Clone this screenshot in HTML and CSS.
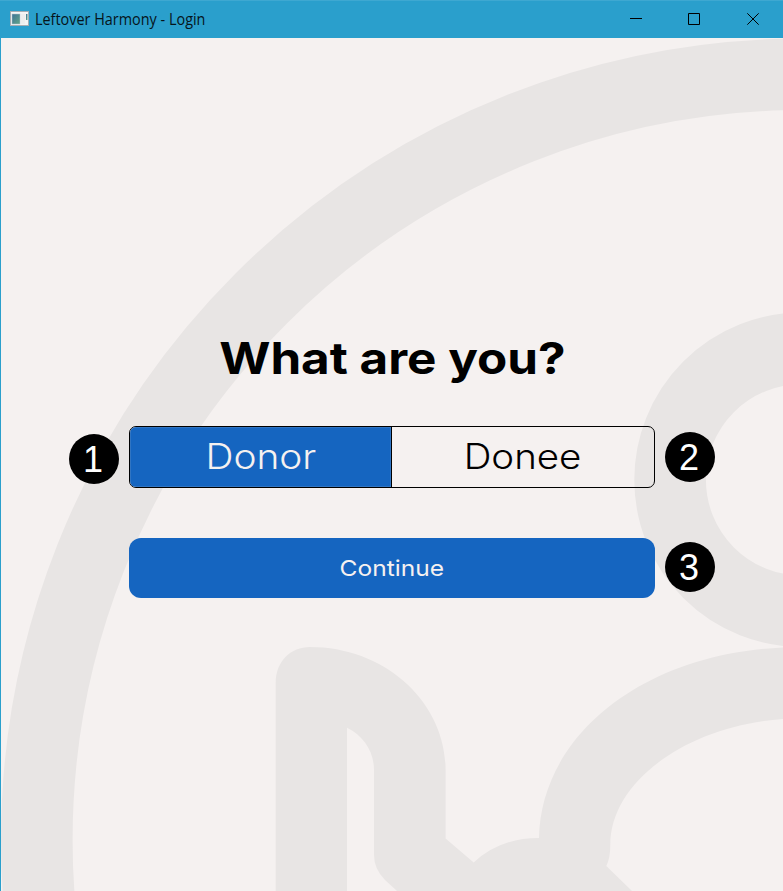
FILE: index.html
```html
<!DOCTYPE html>
<html lang="en">
<head>
<meta charset="utf-8">
<title>Leftover Harmony - Login</title>
<link rel="stylesheet" href="styles.css">
</head>
<body>
<div class="window">
  <header class="titlebar">
    <svg class="app-icon" width="19" height="16" viewBox="0 0 19 16">
      <defs><linearGradient id="pane" x1="0" y1="0" x2="1" y2="1"><stop offset="0" stop-color="#3f7397"/><stop offset="1" stop-color="#63a588"/></linearGradient></defs>
      <rect x=".5" y=".5" width="18" height="14" fill="#f3f4f4" stroke="#a5adb2"/>
      <rect x="2" y="3" width="8" height="10" fill="url(#pane)" stroke="#b1c2cd" stroke-width=".5"/>
      <rect x="11" y="3" width="4" height="10" fill="#eceeee"/>
      <rect x="16" y="3" width="1.5" height="6" fill="url(#pane)"/>
    </svg>
    <span class="title"><span class="title-text">Leftover Harmony - Login</span></span>
    <div class="controls">
      <svg width="58" height="38" viewBox="0 0 58 38"><path d="M22 18.5H34"/></svg>
      <svg width="59" height="38" viewBox="0 0 59 38"><path d="M22.5 13.5h11v11h-11z"/></svg>
      <svg width="58" height="38" viewBox="0 0 58 38"><path d="M22.3 13.3l11.4 11.4M33.7 13.3L22.3 24.7"/></svg>
    </div>
  </header>
  <main class="content">
    <svg class="backdrop" width="782" height="853" viewBox="1 38 782 853">
      <g fill="none" stroke="#e8e5e4" stroke-width="71.6">
        <circle cx="802.5" cy="840" r="765.7"/>
        <circle cx="801.5" cy="479.8" r="131.4"/>
      </g>
      <g fill="#e8e5e4">
        <path d="M275.7 891V683C275.7 661 291 647 310 647C385 647 445.6 702 445.6 770V838.5L473.7 862.5Q500 838 539 838C541 732 650 647 801 647V718.5C700 718.5 610.3 776 610.3 845Q610.3 858 606.3 866L632 891H397L385 880Q374 869 374 855V770C374 752 364 736 347 727.7V891Z"/>
      </g>
    </svg>
    <h1><span class="heading-text">What are you?</span></h1>
    <div class="row choices">
      <div class="toggle">
        <button class="option selected"><span class="donor-text">Donor</span></button>
        <button class="option"><span class="donee-text">Donee</span></button>
      </div>
      <span class="badge before">1</span>
      <span class="badge after">2</span>
    </div>
    <div class="row action">
      <button class="continue"><span class="continue-text">Continue</span></button>
      <span class="badge after">3</span>
    </div>
  </main>
</div>
</body>
</html>
```
FILE: styles.css
```css
* { box-sizing: border-box; }
body { margin: 0; overflow: hidden; }
button { font: inherit; padding: 0; margin: 0; border: 0; background: none; }
.window {
  width: 783px; height: 891px;
  display: flex; flex-direction: column;
  background: #f5f1f0;
  font-family: Inter, "Liberation Sans", sans-serif;
}
.titlebar {
  height: 38px; flex: none;
  display: flex; align-items: center;
  padding-left: 10px;
  background: #2a9fcc;
  border-top: 1px solid #3ea8d1;
}
.app-icon { flex: none; margin-top: -2px; }
.title {
  margin: -2px 0 0 6px; width: 200px;
  font: 15.5px/20px "Open Sans", sans-serif;
  color: #06141a; white-space: nowrap;
}
.title span, h1 span, .option span, .continue span { display: inline-block; }
.title-text { transform-origin: left; transform: scaleX(.93); }
.controls { display: flex; height: 38px; margin: -1px 0 0 auto; }
.controls svg { fill: none; stroke: #000; stroke-width: 1; }
.content {
  position: relative; flex: 1;
  display: flex; flex-direction: column; align-items: center;
  padding-top: 290px;
  border-left: 1px solid #2a9fcc;
}
.backdrop { position: absolute; top: 0; left: 0; }
h1 {
  position: relative;
  margin: 0; height: 60px;
  font-size: 44px; line-height: 60px; font-weight: 700;
  color: #000; white-space: nowrap;
}
.heading-text { transform: scaleX(1.122); }
.row { position: relative; width: 526px; }
.choices { margin-top: 38px; height: 62px; }
.toggle {
  height: 100%;
  display: grid; grid-template-columns: 262px 1fr;
  border: 1.3px solid #000; border-radius: 7px;
  overflow: hidden;
}
.option { font-size: 35px; font-weight: 300; color: #000; padding-bottom: 2px; }
.donor-text { transform: scaleX(1.11); }
.donee-text { transform: scaleX(1.1); }
.option.selected {
  background: #1565c0; color: #f5f1f0;
  border-right: 1px solid #000; box-shadow: inset 0 0 0 .5px #4d86c6;
}
.action { margin-top: 50px; height: 60px; }
.continue {
  width: 100%; height: 100%;
  background: #1565c0; border-radius: 12px;
  color: #f5f1f0; font-size: 22px; font-weight: 400;
}
.continue-text { transform: scaleX(1.115); }
.badge {
  position: absolute; top: 6px;
  width: 50px; height: 50px; border-radius: 50%;
  display: flex; align-items: center; justify-content: center;
  background: #000; color: #fff;
  font: 36px/50px "Liberation Sans", Arial, sans-serif;
  padding: 1px 2px 0 0;
}
.before { left: -60px; top: 8px; }
.after { right: -60px; }
.action .after { top: 4px; }
```
